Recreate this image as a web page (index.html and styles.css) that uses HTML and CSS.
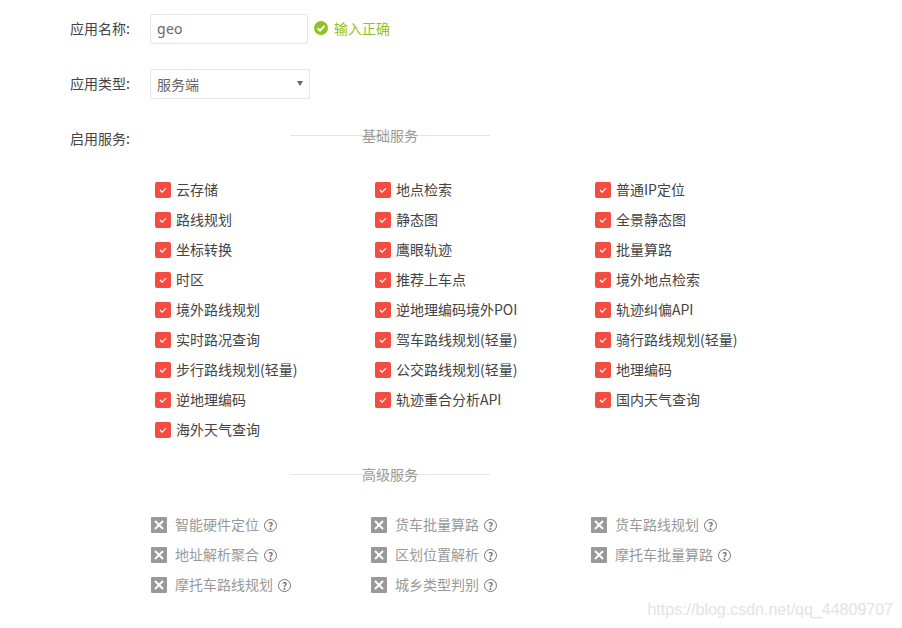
FILE: index.html

```html
<!DOCTYPE html>
<html lang="zh-CN">
<head>
  <meta charset="UTF-8" />
  <title>创建应用</title>
  <link rel="stylesheet" href="styles.css">
</head>
<body>
  <div class="form">
    <div class="row row-name">
      <label class="label">应用名称:</label>
      <input class="input" type="text" value="geo">
      <span class="ok">
        <svg class="ok-icon" viewBox="0 0 14 14"><circle cx="7" cy="7" r="7" fill="#8fc31f"/><path d="M3.6 7.2l2.4 2.4 4.4-4.6" fill="none" stroke="#fff" stroke-width="2"/></svg>
        输入正确
      </span>
    </div>
    <div class="row row-type">
      <label class="label">应用类型:</label>
      <div class="select">服务端<span class="arrow"></span></div>
    </div>
    <div class="row row-services">
      <label class="label">启用服务:</label>
      <div class="divider"><span>基础服务</span></div>
    </div>
    <div class="services">
      <div class="check"><i class="box"><svg viewBox="0 0 16 16"><path d="M5 8l2.2 2.2L11 6.2"/></svg></i>云存储</div>
      <div class="check"><i class="box"><svg viewBox="0 0 16 16"><path d="M5 8l2.2 2.2L11 6.2"/></svg></i>地点检索</div>
      <div class="check"><i class="box"><svg viewBox="0 0 16 16"><path d="M5 8l2.2 2.2L11 6.2"/></svg></i>普通IP定位</div>
      <div class="check"><i class="box"><svg viewBox="0 0 16 16"><path d="M5 8l2.2 2.2L11 6.2"/></svg></i>路线规划</div>
      <div class="check"><i class="box"><svg viewBox="0 0 16 16"><path d="M5 8l2.2 2.2L11 6.2"/></svg></i>静态图</div>
      <div class="check"><i class="box"><svg viewBox="0 0 16 16"><path d="M5 8l2.2 2.2L11 6.2"/></svg></i>全景静态图</div>
      <div class="check"><i class="box"><svg viewBox="0 0 16 16"><path d="M5 8l2.2 2.2L11 6.2"/></svg></i>坐标转换</div>
      <div class="check"><i class="box"><svg viewBox="0 0 16 16"><path d="M5 8l2.2 2.2L11 6.2"/></svg></i>鹰眼轨迹</div>
      <div class="check"><i class="box"><svg viewBox="0 0 16 16"><path d="M5 8l2.2 2.2L11 6.2"/></svg></i>批量算路</div>
      <div class="check"><i class="box"><svg viewBox="0 0 16 16"><path d="M5 8l2.2 2.2L11 6.2"/></svg></i>时区</div>
      <div class="check"><i class="box"><svg viewBox="0 0 16 16"><path d="M5 8l2.2 2.2L11 6.2"/></svg></i>推荐上车点</div>
      <div class="check"><i class="box"><svg viewBox="0 0 16 16"><path d="M5 8l2.2 2.2L11 6.2"/></svg></i>境外地点检索</div>
      <div class="check"><i class="box"><svg viewBox="0 0 16 16"><path d="M5 8l2.2 2.2L11 6.2"/></svg></i>境外路线规划</div>
      <div class="check"><i class="box"><svg viewBox="0 0 16 16"><path d="M5 8l2.2 2.2L11 6.2"/></svg></i>逆地理编码境外POI</div>
      <div class="check"><i class="box"><svg viewBox="0 0 16 16"><path d="M5 8l2.2 2.2L11 6.2"/></svg></i>轨迹纠偏API</div>
      <div class="check"><i class="box"><svg viewBox="0 0 16 16"><path d="M5 8l2.2 2.2L11 6.2"/></svg></i>实时路况查询</div>
      <div class="check"><i class="box"><svg viewBox="0 0 16 16"><path d="M5 8l2.2 2.2L11 6.2"/></svg></i>驾车路线规划(轻量)</div>
      <div class="check"><i class="box"><svg viewBox="0 0 16 16"><path d="M5 8l2.2 2.2L11 6.2"/></svg></i>骑行路线规划(轻量)</div>
      <div class="check"><i class="box"><svg viewBox="0 0 16 16"><path d="M5 8l2.2 2.2L11 6.2"/></svg></i>步行路线规划(轻量)</div>
      <div class="check"><i class="box"><svg viewBox="0 0 16 16"><path d="M5 8l2.2 2.2L11 6.2"/></svg></i>公交路线规划(轻量)</div>
      <div class="check"><i class="box"><svg viewBox="0 0 16 16"><path d="M5 8l2.2 2.2L11 6.2"/></svg></i>地理编码</div>
      <div class="check"><i class="box"><svg viewBox="0 0 16 16"><path d="M5 8l2.2 2.2L11 6.2"/></svg></i>逆地理编码</div>
      <div class="check"><i class="box"><svg viewBox="0 0 16 16"><path d="M5 8l2.2 2.2L11 6.2"/></svg></i>轨迹重合分析API</div>
      <div class="check"><i class="box"><svg viewBox="0 0 16 16"><path d="M5 8l2.2 2.2L11 6.2"/></svg></i>国内天气查询</div>
      <div class="check"><i class="box"><svg viewBox="0 0 16 16"><path d="M5 8l2.2 2.2L11 6.2"/></svg></i>海外天气查询</div>
    </div>
    <div class="divider divider-adv"><span>高级服务</span></div>
    <div class="services services-adv">
      <div class="check off"><i class="box"><svg viewBox="0 0 16 16"><path d="M4 4l8 8M12 4l-8 8"/></svg></i>智能硬件定位<b class="help">?</b></div>
      <div class="check off"><i class="box"><svg viewBox="0 0 16 16"><path d="M4 4l8 8M12 4l-8 8"/></svg></i>货车批量算路<b class="help">?</b></div>
      <div class="check off"><i class="box"><svg viewBox="0 0 16 16"><path d="M4 4l8 8M12 4l-8 8"/></svg></i>货车路线规划<b class="help">?</b></div>
      <div class="check off"><i class="box"><svg viewBox="0 0 16 16"><path d="M4 4l8 8M12 4l-8 8"/></svg></i>地址解析聚合<b class="help">?</b></div>
      <div class="check off"><i class="box"><svg viewBox="0 0 16 16"><path d="M4 4l8 8M12 4l-8 8"/></svg></i>区划位置解析<b class="help">?</b></div>
      <div class="check off"><i class="box"><svg viewBox="0 0 16 16"><path d="M4 4l8 8M12 4l-8 8"/></svg></i>摩托车批量算路<b class="help">?</b></div>
      <div class="check off"><i class="box"><svg viewBox="0 0 16 16"><path d="M4 4l8 8M12 4l-8 8"/></svg></i>摩托车路线规划<b class="help">?</b></div>
      <div class="check off"><i class="box"><svg viewBox="0 0 16 16"><path d="M4 4l8 8M12 4l-8 8"/></svg></i>城乡类型判别<b class="help">?</b></div>
    </div>
  </div>
  <div class="watermark">https://blog.csdn.net/qq_44809707</div>
</body>
</html>
```

FILE: styles.css

```css
html, body {
  height: 100%;
}

body {
  margin: 0;
  background: #fff;
  color: #333;
  font-family: "Noto Sans CJK SC", "Noto Sans", sans-serif;
  font-size: 14px;
  position: relative;
  overflow: hidden;
}

.form {
  padding: 14px 0 0 70px;
}

.row {
  display: flex;
  align-items: flex-start;
  height: 30px;
  line-height: 28px;
}

.row-type {
  margin-top: 25px;
}

.row-services {
  margin-top: 25px;
}

.label {
  width: 80px;
  flex: none;
  color: #444;
}

.input {
  box-sizing: border-box;
  width: 158px;
  height: 30px;
  padding: 0 6px 2px;
  border: 1px solid #e3e6ec;
  border-radius: 2px;
  color: #666;
  font-family: "Noto Sans", sans-serif;
  font-size: 14px;
  letter-spacing: 0.3px;
  outline: none;
}

.ok {
  display: flex;
  align-items: center;
  gap: 6px;
  height: 28px;
  margin-left: 6px;
  color: #8fc31f;
}

.ok-icon {
  width: 14px;
  height: 14px;
}

.select {
  box-sizing: border-box;
  width: 160px;
  height: 30px;
  padding-left: 6px;
  border: 1px solid #e3e6ec;
  border-radius: 2px;
  color: #666;
  line-height: 28px;
  position: relative;
}

.arrow {
  position: absolute;
  right: 6px;
  top: 11px;
  border: 3px solid transparent;
  border-top: 5px solid #666;
  border-bottom: 0;
}

.divider {
  width: 200px;
  height: 1px;
  margin-top: 11px;
  margin-left: 140px;
  background: #e5e5e5;
  color: #999;
  line-height: 20px;
  display: flex;
  justify-content: center;
  align-items: center;
}

.divider span {
  flex: none;
  padding-bottom: 2px;
}

.divider-adv {
  margin: 29px 0 0 220px;
}

.services {
  display: grid;
  grid-template-columns: repeat(3, 220px);
  grid-auto-rows: 30px;
  margin: 21px 0 0 85px;
}

.services-adv {
  margin: 35px 0 0 81px;
}

.check {
  display: flex;
  align-items: flex-start;
  color: #444;
  line-height: 28px;
}

.box {
  width: 16px;
  height: 16px;
  margin: 7px 5px 0 0;
  border-radius: 2px;
  background: #f44c40;
  flex: none;
}

.box svg {
  display: block;
  width: 16px;
  height: 16px;
  fill: none;
  stroke: #fff;
  stroke-width: 1.2;
}

.off {
  color: #999;
}

.off .box {
  margin-right: 8px;
  background: #999;
  border-radius: 1px;
}

.off .box svg {
  stroke-width: 2;
}

.help {
  box-sizing: border-box;
  width: 13px;
  height: 13px;
  margin: 9px 0 0 5px;
  border: 1px solid #777;
  border-radius: 50%;
  color: #777;
  font-size: 10px;
  font-weight: bold;
  line-height: 11px;
  text-align: center;
}

.watermark {
  position: absolute;
  right: 9px;
  bottom: 9px;
  color: #e3e3e3;
  font-family: "Liberation Sans", sans-serif;
  font-size: 16px;
}
```
